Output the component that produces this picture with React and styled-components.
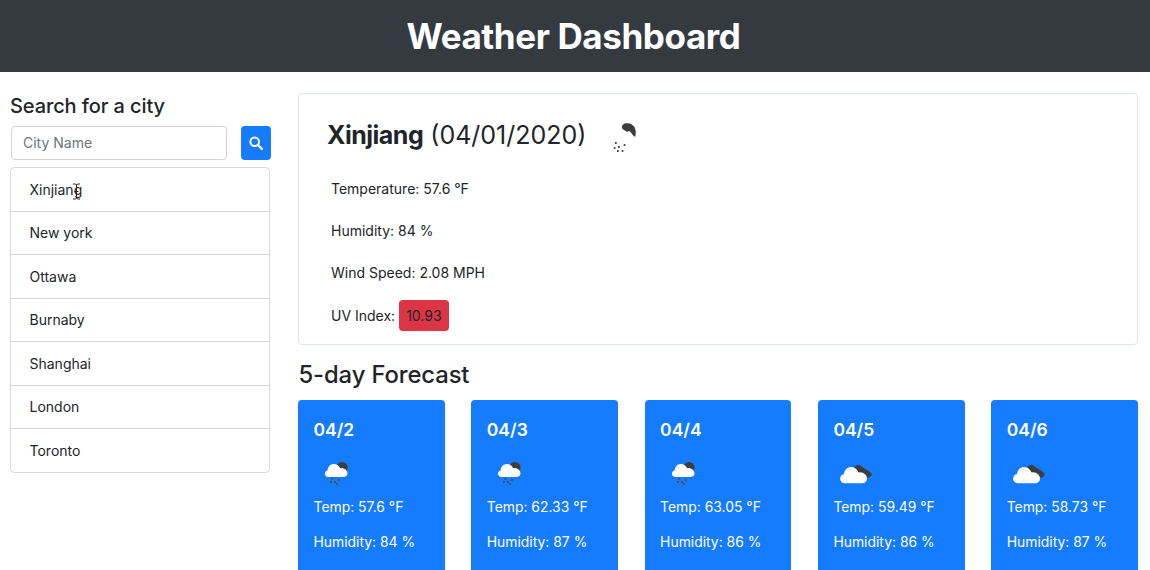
import styled, { createGlobalStyle } from "styled-components";

const GlobalStyle = createGlobalStyle`
  html, body {
    margin: 0;
    height: 570px;
    overflow: hidden;
    background: #fff;
  }
  body {
    font-family: Inter, "Liberation Sans", sans-serif;
    color: #212529;
    font-size: 14px;
  }
  * { box-sizing: border-box; }
`;

const Header = styled.header`
  height: 72px;
  padding-right: 3px;
  background: #343a40;
  color: #fff;
  display: flex;
  align-items: center;
  justify-content: center;
`;
const Title = styled.h1`
  margin: 0;
  font-size: 35px;
  font-weight: 700;
  letter-spacing: -0.4px;
`;
const Layout = styled.div`
  display: grid;
  grid-template-columns: 260px 840px;
  column-gap: 28px;
  padding: 21px 0 0 10px;
`;
const Sidebar = styled.aside`
  display: flex;
  flex-direction: column;
`;
const SideTitle = styled.h2`
  margin: 0;
  font-size: 20px;
  line-height: 26px;
  font-weight: 500;
  letter-spacing: -0.1px;
`;
const SearchRow = styled.form`
  display: flex;
  justify-content: space-between;
  margin: 7px -1px 7px 1px;
`;
const Input = styled.input`
  width: 216px;
  height: 34px;
  padding: 0 11px 2px;
  border: 1px solid #ced4da;
  border-radius: 4px;
  font: 14px Inter, sans-serif;
  &::placeholder { color: #6c757d; opacity: 1; }
`;
const SearchButton = styled.button`
  width: 30px;
  height: 34px;
  padding: 0;
  border: none;
  border-radius: 4px;
  background: #157bff;
  display: flex;
  align-items: center;
  justify-content: center;
`;
const CityList = styled.ul`
  position: relative;
  margin: 0;
  padding: 0;
  list-style: none;
  border: 1px solid #d6dade;
  border-radius: 4px;
`;
const CityItem = styled.li`
  height: 43.5px;
  padding: 0 18.5px;
  display: flex;
  align-items: center;
  font-size: 14px;
  &:first-child { height: 42.5px; }
  &:last-child { height: 43px; }
  & + & { border-top: 1px solid #d6dade; }
`;
const TextCursor = styled.svg`
  position: absolute;
  left: 61px;
  top: 15px;
`;
const Main = styled.main`
  display: flex;
  flex-direction: column;
`;
const CurrentCard = styled.section`
  height: 252px;
  padding: 23px 28px 0;
  border: 1px solid #dfe6ea;
  border-radius: 4px;
`;
const CityHeading = styled.div`
  display: flex;
  align-items: center;
  height: 36px;
  margin-bottom: 14px;
`;
const CityName = styled.h2`
  margin: 0;
  font-size: 25px;
  font-weight: 400;
  b {
    font-weight: 700;
    letter-spacing: -0.5px;
  }
`;
const Stat = styled.p`
  margin: 0 0 0 4px;
  height: 42.3px;
  display: flex;
  align-items: center;
  font-size: 14px;
`;
const UvBadge = styled.span`
  margin-left: 3.5px;
  padding: 0 7.5px;
  height: 31px;
  display: inline-flex;
  align-items: center;
  background: #dc3545;
  border-radius: 4px;
`;
const ForecastTitle = styled.h2`
  margin: 15px 0 11px 0.5px;
  font-size: 23.8px;
  line-height: 29px;
  font-weight: 500;
  letter-spacing: -0.1px;
`;
const ForecastGrid = styled.div`
  display: grid;
  grid-template-columns: repeat(5, 146.8px);
  justify-content: space-between;
`;
const DayCard = styled.article`
  height: 200px;
  padding: 19px 15.5px;
  background: #157bff;
  color: #fff;
  border-radius: 4px;
`;
const DayDate = styled.h3`
  margin: 0;
  font-size: 17.5px;
  line-height: 22px;
  font-weight: 600;
`;
const IconSlot = styled.div`
  height: 48.5px;
  padding: 17px 0 0 8.5px;
`;
const DayStat = styled.p`
  margin: 0;
  height: 35px;
  display: flex;
  align-items: center;
  font-size: 13.9px;
  font-weight: 400;
`;

const RainDrops = ({ drops }) => (
  <g fill="#4a4a4a">
    {drops.map(([x, y]) => (
      <rect key={`${x}-${y}`} x={x} y={y} width="1.7" height="2" />
    ))}
  </g>
);

// rain icon, the white cloud does not show on the white panel
const RainOnWhite = () => (
  <svg width="30" height="36" viewBox="0 0 30 36" style={{ marginLeft: 25 }}>
    <path
      d="M10.7 9.7 C11.5 7.5 13 6.3 15 6.3 C18 5.8 20 6.5 22 8.5 C24.5 10.5 25.5 14 24.3 19.7 C23.5 19.5 22.5 19 21.7 18 C20.5 16 19.5 14.8 18.3 14 C17 14.5 16.5 14.7 16 14.7 C15 14.5 14 13.5 13.3 13 C12 12.8 11 11.5 10.7 9.7 Z"
      fill="#3d3d3d"
    />
    <RainDrops drops={[[4, 25], [2.7, 30], [7, 29], [12.7, 27], [10.7, 33], [6, 33]]} />
  </svg>
);

const RainCloud = () => (
  <svg width="30" height="30" viewBox="0 0 30 30">
    <circle cx="20" cy="9.5" r="5.6" fill="#3d3d3d" />
    <path
      d="M6.5 19 C2.5 19 1.5 13.5 5.5 12.5 C6 8 9 6 12 6 C15 6 17 8 18 10 C22 9.5 25.5 12 25.5 15.5 C25.5 18 23 19 21 19 Z"
      fill="#fff"
    />
    <RainDrops drops={[[9.5, 19.5], [8, 23], [12, 23], [16, 21], [14, 25]]} />
  </svg>
);

const DarkCloud = () => (
  <svg width="36" height="30" viewBox="0 0 36 30" style={{ marginLeft: -4 }}>
    <path
      d="M18 9.5 L20.5 8.5 L25.5 12 L30 14.5 L32 16.5 L30 18 L20 14 Z"
      fill="#3d3d3d"
      stroke="#3d3d3d"
      strokeWidth="3.5"
      strokeLinejoin="round"
    />
    <path
      d="M7 25.3 C1 25.3 0.5 17 6 16 C6.5 11.5 10 9 13 9 C17 9 19.5 12 20.5 14.5 C25 13.5 29 17 29 20.5 C29 23.5 27 25.3 24 25.3 Z"
      fill="#fff"
    />
  </svg>
);

const cities = ["Xinjiang", "New york", "Ottawa", "Burnaby", "Shanghai", "London", "Toronto"];
const days = [
  { date: "04/2", temp: "57.6", humidity: 84, Icon: RainCloud },
  { date: "04/3", temp: "62.33", humidity: 87, Icon: RainCloud },
  { date: "04/4", temp: "63.05", humidity: 86, Icon: RainCloud },
  { date: "04/5", temp: "59.49", humidity: 86, Icon: DarkCloud },
  { date: "04/6", temp: "58.73", humidity: 87, Icon: DarkCloud },
];

export default function App() {
  return (
    <>
      <GlobalStyle />
      <Header>
        <Title>Weather Dashboard</Title>
      </Header>
      <Layout>
        <Sidebar>
          <SideTitle>Search for a city</SideTitle>
          <SearchRow onSubmit={(e) => e.preventDefault()}>
            <Input placeholder="City Name" />
            <SearchButton aria-label="Search">
              <svg width="14" height="14" viewBox="0 0 14 14" fill="none" stroke="#fff">
                <circle cx="5.7" cy="5.7" r="4.3" strokeWidth="2" />
                <path d="M9 9 L13 13" strokeWidth="2.4" strokeLinecap="round" />
              </svg>
            </SearchButton>
          </SearchRow>
          <CityList>
            {cities.map((city) => (
              <CityItem key={city}>{city}</CityItem>
            ))}
            <TextCursor width="9" height="17" viewBox="0 0 9 17" fill="none" stroke="#222" strokeWidth="1">
              <path d="M1 1 H3.5 L4.5 2 L5.5 1 H8 M4.5 2 V15 M1 16 H3.5 L4.5 15 L5.5 16 H8 M2.5 8.5 H6.5" />
            </TextCursor>
          </CityList>
        </Sidebar>
        <Main>
          <CurrentCard>
            <CityHeading>
              <CityName>
                <b>Xinjiang</b> (04/01/2020)
              </CityName>
              <RainOnWhite />
            </CityHeading>
            <Stat>Temperature: 57.6 °F</Stat>
            <Stat>Humidity: 84 %</Stat>
            <Stat>Wind Speed: 2.08 MPH</Stat>
            <Stat>
              UV Index: <UvBadge>10.93</UvBadge>
            </Stat>
          </CurrentCard>
          <ForecastTitle>5-day Forecast</ForecastTitle>
          <ForecastGrid>
            {days.map(({ date, temp, humidity, Icon }) => (
              <DayCard key={date}>
                <DayDate>{date}</DayDate>
                <IconSlot>
                  <Icon />
                </IconSlot>
                <DayStat>Temp: {temp} °F</DayStat>
                <DayStat>Humidity: {humidity} %</DayStat>
              </DayCard>
            ))}
          </ForecastGrid>
        </Main>
      </Layout>
    </>
  );
}
